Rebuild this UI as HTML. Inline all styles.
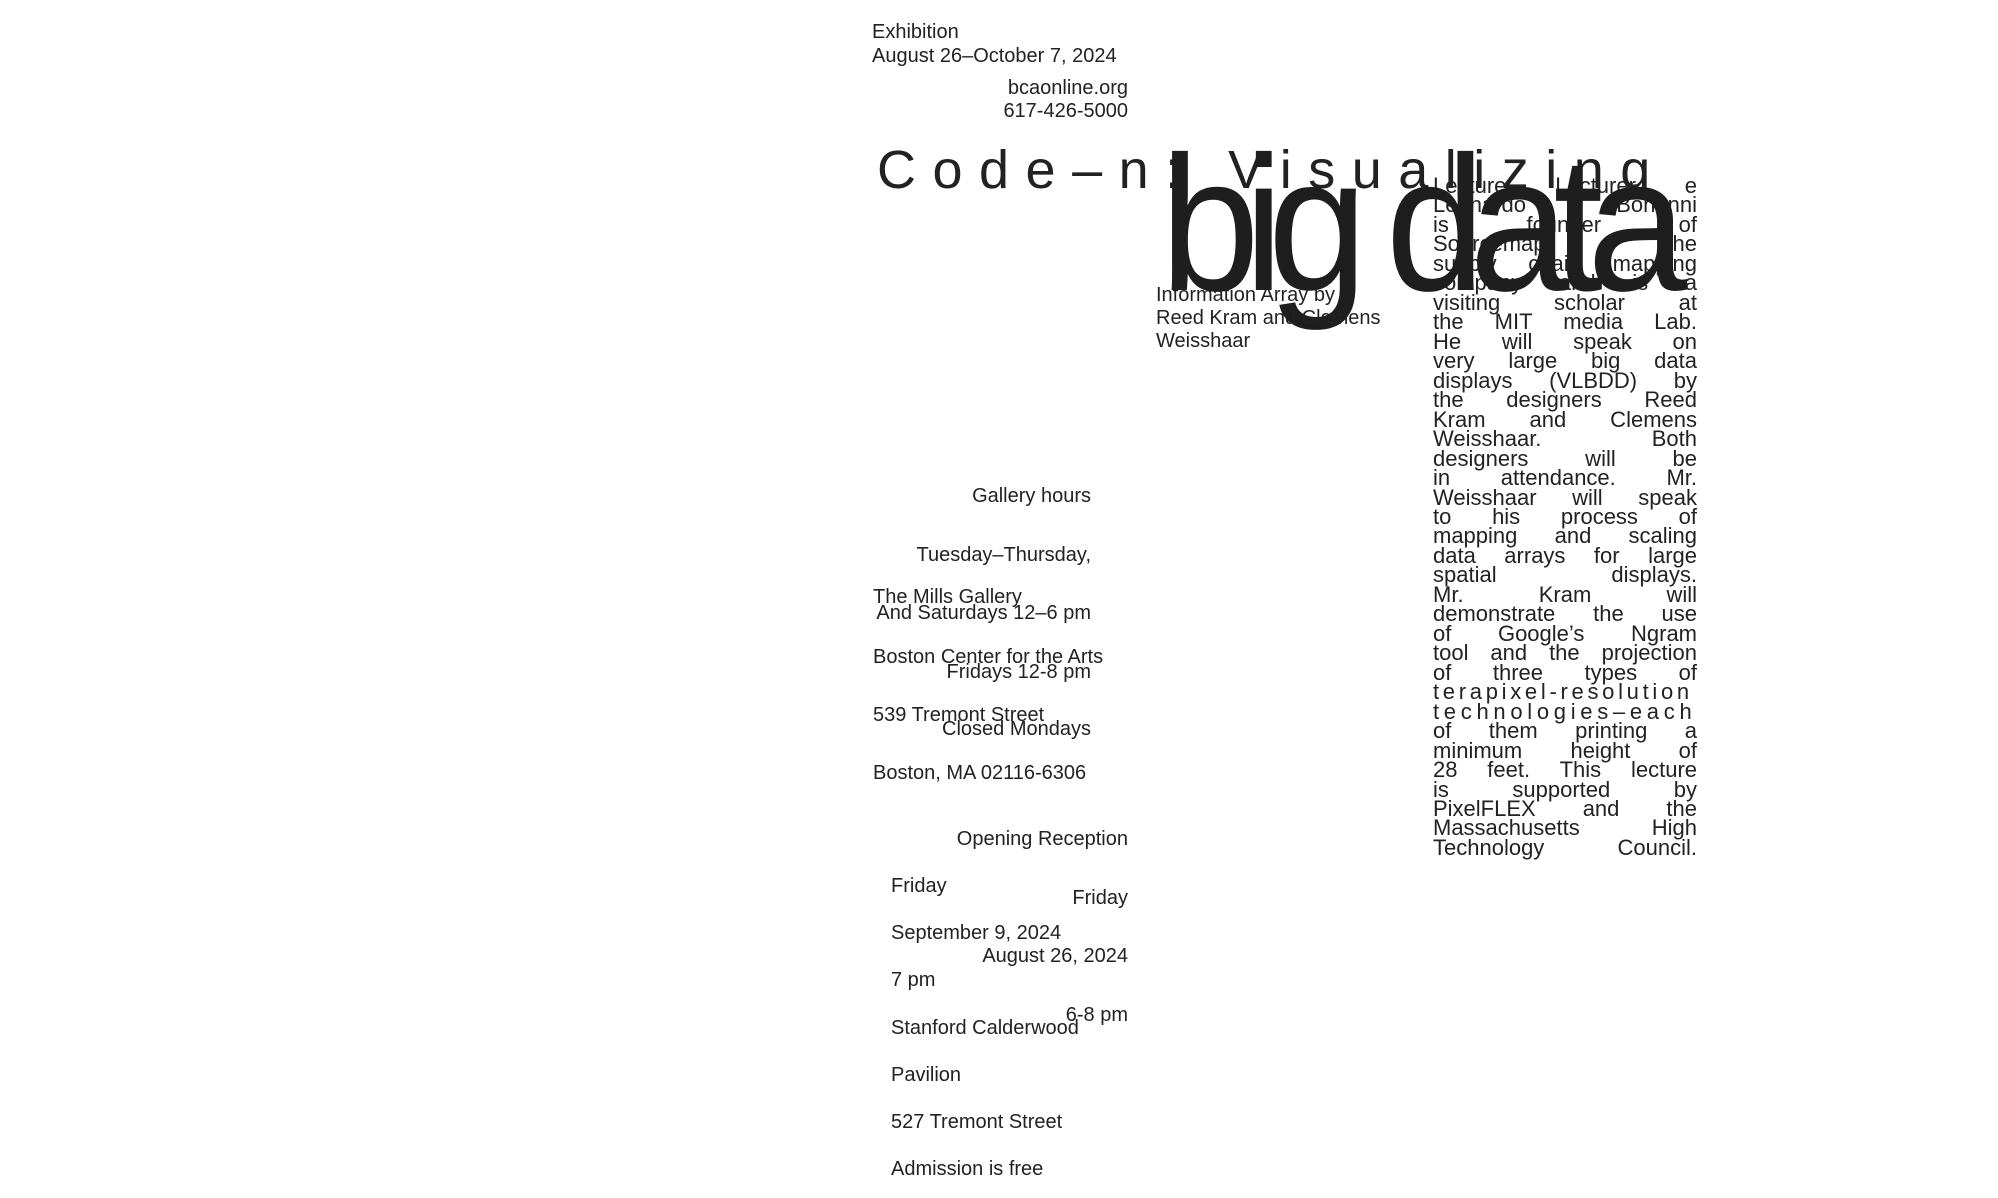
<!DOCTYPE html>
<html><head><meta charset="utf-8">
<style>
html,body{margin:0;padding:0;background:#fff;}
body{width:1998px;height:1198px;position:relative;overflow:hidden;font-family:"Liberation Sans",sans-serif;color:#222;}
.t{position:absolute;font-size:20px;line-height:22px;white-space:nowrap;}
.r{text-align:right;}
.big{position:absolute;left:1160px;top:128px;font-size:192px;line-height:192px;letter-spacing:-17px;transform:scaleX(0.934);transform-origin:left top;white-space:nowrap;color:#1e1e1e;}
.code{position:absolute;left:877px;top:140px;font-size:54px;line-height:60px;letter-spacing:16.5px;white-space:nowrap;}
.p{position:absolute;left:1433px;top:176px;width:264px;font-size:22px;line-height:19.47px;}
.p div{text-align:justify;text-align-last:justify;white-space:nowrap;height:19.47px;}
</style></head><body>
<div class="t" style="left:872px;top:21px">Exhibition</div>
<div class="t" style="left:872px;top:45px">August 26–October 7, 2024</div>
<div class="t r" style="right:870px;top:77px">bcaonline.org</div>
<div class="t r" style="right:870px;top:100px">617-426-5000</div>

<div class="code">Code–n: Visualizing</div>

<div class="p">
<div>Lecture Lecturer e</div>
<div>Leonardo Bonanni</div>
<div>is founder of</div>
<div>Sourcemap, the</div>
<div>supply chain mapping</div>
<div>company and is a</div>
<div>visiting scholar at</div>
<div>the MIT media Lab.</div>
<div>He will speak on</div>
<div>very large big data</div>
<div>displays (VLBDD) by</div>
<div>the designers Reed</div>
<div>Kram and Clemens</div>
<div>Weisshaar. Both</div>
<div>designers will be</div>
<div>in attendance. Mr.</div>
<div>Weisshaar will speak</div>
<div>to his process of</div>
<div>mapping and scaling</div>
<div>data arrays for large</div>
<div>spatial displays.</div>
<div>Mr. Kram will</div>
<div>demonstrate the use</div>
<div>of Google’s Ngram</div>
<div>tool and the projection</div>
<div>of three types of</div>
<div style="letter-spacing:3.7px;text-align-last:left">terapixel-resolution</div>
<div style="letter-spacing:4.7px;text-align-last:left">technologies–each</div>
<div>of them printing a</div>
<div>minimum height of</div>
<div>28 feet. This lecture</div>
<div>is supported by</div>
<div>PixelFLEX and the</div>
<div>Massachusetts High</div>
<div>Technology Council.</div>
</div>

<div class="big">big data</div>

<div class="t" style="left:1156px;top:284px">Information Array by</div>
<div class="t" style="left:1156px;top:307px">Reed Kram and Clemens</div>
<div class="t" style="left:1156px;top:330px">Weisshaar</div>

<div class="t r" style="right:907px;top:485px">Gallery hours</div>
<div class="t r" style="right:907px;top:544px">Tuesday–Thursday,</div>
<div class="t" style="left:873px;top:586px">The Mills Gallery</div>
<div class="t r" style="right:907px;top:602px">And Saturdays 12–6 pm</div>
<div class="t" style="left:873px;top:646px">Boston Center for the Arts</div>
<div class="t r" style="right:907px;top:661px">Fridays 12-8 pm</div>
<div class="t" style="left:873px;top:704px">539 Tremont Street</div>
<div class="t r" style="right:907px;top:718px">Closed Mondays</div>
<div class="t" style="left:873px;top:762px">Boston, MA 02116-6306</div>

<div class="t r" style="right:870px;top:828px">Opening Reception</div>
<div class="t" style="left:891px;top:875px">Friday</div>
<div class="t r" style="right:870px;top:887px">Friday</div>
<div class="t" style="left:891px;top:922px">September 9, 2024</div>
<div class="t r" style="right:870px;top:945px">August 26, 2024</div>
<div class="t" style="left:891px;top:969px">7 pm</div>
<div class="t r" style="right:870px;top:1004px">6-8 pm</div>
<div class="t" style="left:891px;top:1017px">Stanford Calderwood</div>
<div class="t" style="left:891px;top:1064px">Pavilion</div>
<div class="t" style="left:891px;top:1111px">527 Tremont Street</div>
<div class="t" style="left:891px;top:1158px">Admission is free</div>
</body></html>
